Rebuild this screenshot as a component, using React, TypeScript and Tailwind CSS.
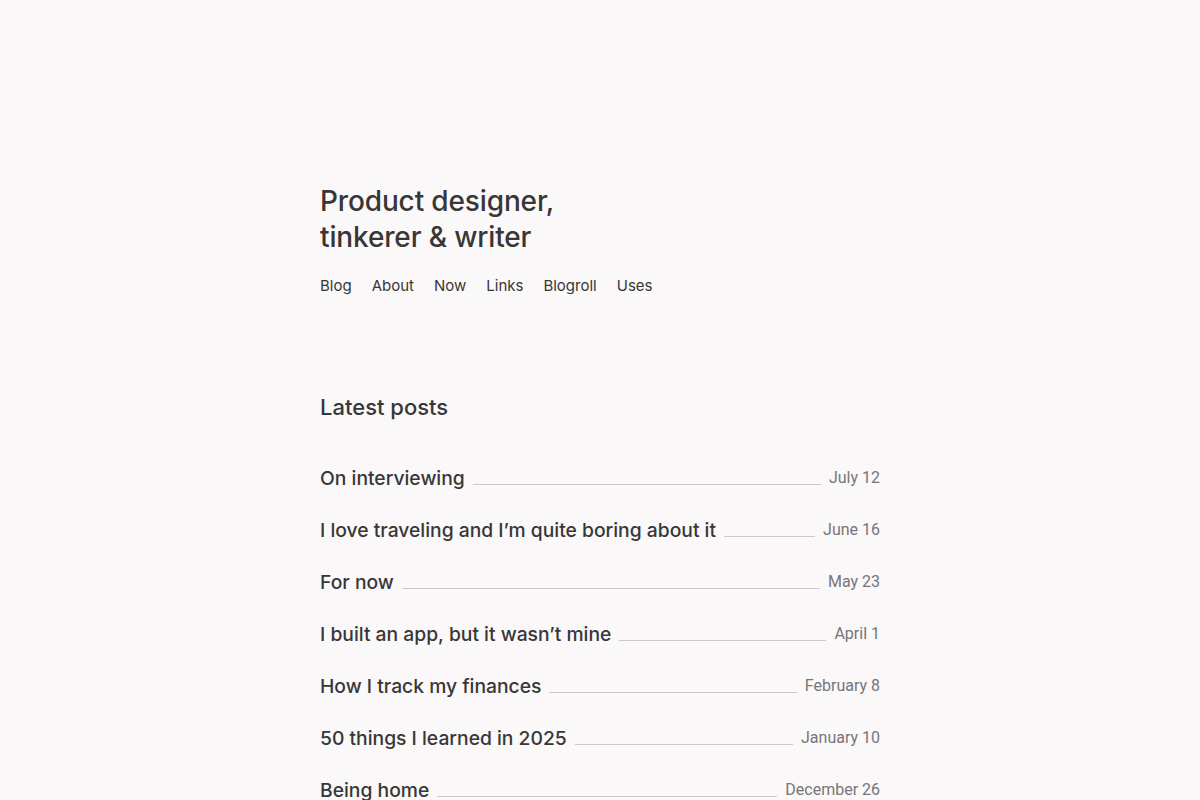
const NAV = ['Blog', 'About', 'Now', 'Links', 'Blogroll', 'Uses'];

const POSTS = [
  { title: 'On interviewing', date: 'July 12' },
  { title: 'I love traveling and I’m quite boring about it', date: 'June 16' },
  { title: 'For now', date: 'May 23' },
  { title: 'I built an app, but it wasn’t mine', date: 'April 1' },
  { title: 'How I track my finances', date: 'February 8' },
  { title: '50 things I learned in 2025', date: 'January 10' },
  { title: 'Being home', date: 'December 26' },
];

export default function App() {
  return (
    <div className="min-h-screen bg-[#faf8f8] text-[#383636] font-['Inter',sans-serif]">
      <main className="w-[560px] mx-auto pt-[183px]">
        {/* Intro */}
        <header>
          <h1 className="text-[28px] leading-[36px] font-medium tracking-[-0.005em]">
            Product designer,
            <br />
            tinkerer &amp; writer
          </h1>
          <nav className="mt-[21px] flex gap-5 text-[15px] leading-[20px]">
            {NAV.map((item) => (
              <a key={item} href="#" className="hover:underline">
                {item}
              </a>
            ))}
          </nav>
        </header>

        {/* Posts */}
        <section className="mt-[96px]">
          <h2 className="text-[22px] leading-[30px] font-medium">Latest posts</h2>
          <ul className="mt-[30px] flex flex-col">
            {POSTS.map((post) => (
              <li key={post.title} className="flex items-center h-[52px]">
                <a href="#" className="text-[19.3px] font-medium whitespace-nowrap">
                  {post.title}
                </a>
                <span className="flex-1 h-px bg-[#cbc9c9] mx-2 mt-[12px]"></span>
                <span className="text-[16px] text-[#77757a] font-['Roboto',sans-serif] whitespace-nowrap">
                  {post.date}
                </span>
              </li>
            ))}
          </ul>
        </section>
      </main>
    </div>
  );
}
